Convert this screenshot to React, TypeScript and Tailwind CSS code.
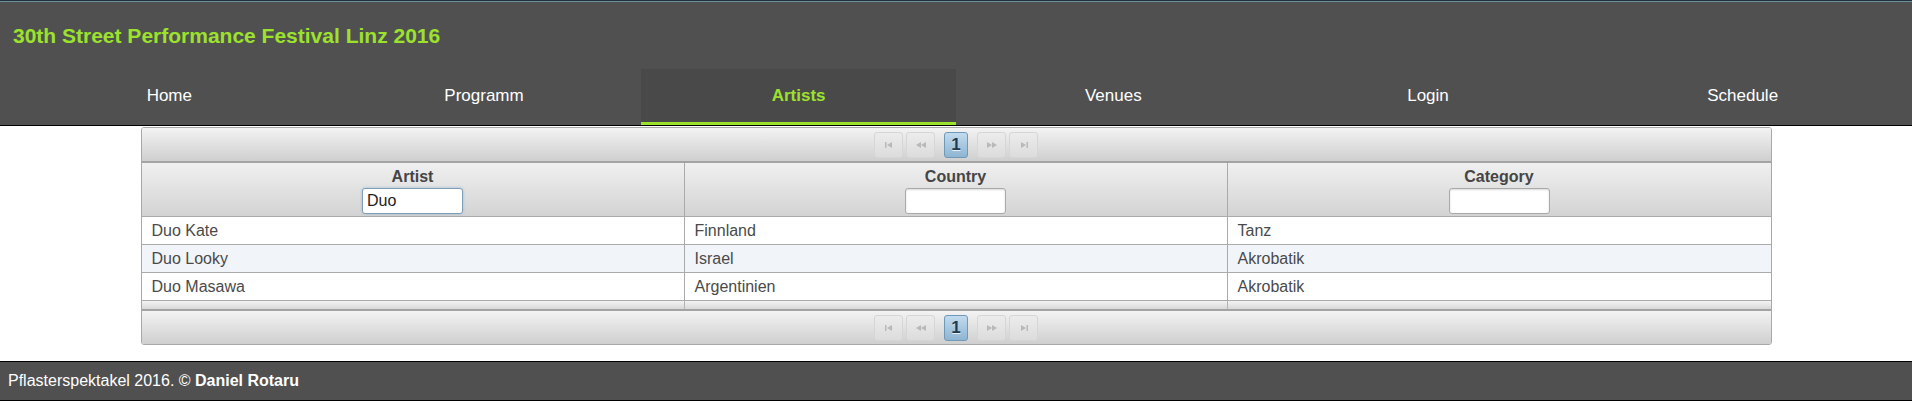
import React from "react";

const navItems = ["Home", "Programm", "Artists", "Venues", "Login", "Schedule"];

const rows = [
  ["Duo Kate", "Finnland", "Tanz"],
  ["Duo Looky", "Israel", "Akrobatik"],
  ["Duo Masawa", "Argentinien", "Akrobatik"],
];

function Icon({ kind }: { kind: "first" | "prev" | "next" | "last" }) {
  const c = "#b9b9b9";
  return (
    <svg width="12" height="8" viewBox="0 0 12 8">
      {kind === "first" && (
        <g fill={c}>
          <rect x="2" y="1" width="1.5" height="6" />
          <polygon points="9,1 4,4 9,7" />
        </g>
      )}
      {kind === "prev" && (
        <g fill={c}>
          <polygon points="6,1 1,4 6,7" />
          <polygon points="11,1 6,4 11,7" />
        </g>
      )}
      {kind === "next" && (
        <g fill={c}>
          <polygon points="1,1 6,4 1,7" />
          <polygon points="6,1 11,4 6,7" />
        </g>
      )}
      {kind === "last" && (
        <g fill={c}>
          <polygon points="3,1 8,4 3,7" />
          <rect x="8.5" y="1" width="1.5" height="6" />
        </g>
      )}
    </svg>
  );
}

function PagerButton({ kind }: { kind: "first" | "prev" | "next" | "last" }) {
  return (
    <div className="w-[29px] h-[26px] rounded-[3px] border border-[#d6d6d6] bg-gradient-to-b from-[#ececec] to-[#dcdcdc] flex items-center justify-center">
      <Icon kind={kind} />
    </div>
  );
}

function Paginator({ top }: { top: boolean }) {
  return (
    <div
      className={
        "h-[35px] bg-gradient-to-b from-[#f3f3f3] to-[#cfcfcf] flex items-center justify-center gap-[3px] " +
        (top ? "border-b-2 border-[#a3a3a3]" : "border-t-2 border-[#a3a3a3]")
      }
    >
      <PagerButton kind="first" />
      <PagerButton kind="prev" />
      <div className="mx-[6px] w-[24px] h-[26px] rounded-[3px] border border-[#6f99b8] bg-gradient-to-b from-[#c2dbee] to-[#8fb5d2] flex items-center justify-center text-[17px] font-bold text-[#1d3a52] [text-shadow:0_1px_0_#e6f0f8]">
        1
      </div>
      <PagerButton kind="next" />
      <PagerButton kind="last" />
    </div>
  );
}

export default function App() {
  return (
    <div className="w-[1912px] bg-white font-['Liberation_Sans',Arial,sans-serif]">
      <header className="bg-[#505050]">
        <div className="h-px bg-[#22313a]" />
        <div className="h-px bg-[#6d929e]" />
        <div className="h-[67px] flex items-center pl-[13px] text-[21px] font-bold text-[#9ce22d]">
          30th Street Performance Festival Linz 2016
        </div>
        <nav className="grid grid-cols-6 px-3 h-[56px]">
          {navItems.map((n) =>
            n === "Artists" ? (
              <div
                key={n}
                className="flex items-center justify-center bg-[#494949] border-b-[3px] border-[#9ce22d] text-[17px] font-bold text-[#9ce22d]"
              >
                {n}
              </div>
            ) : (
              <div key={n} className="flex items-center justify-center pb-[3px] text-[17px] text-white">
                {n}
              </div>
            )
          )}
        </nav>
        <div className="h-px bg-black" />
      </header>

      <main className="pt-px">
        <div className="w-[1631px] mx-auto border border-[#a8a8a8] rounded-[3px] overflow-hidden">
          <Paginator top />
          <div className="grid grid-cols-3 h-[54px] border-b border-[#aaaaaa] bg-gradient-to-b from-[#f0f0f0] to-[#d3d3d3]">
            {["Artist", "Country", "Category"].map((h, i) => (
              <div
                key={h}
                className={
                  "flex flex-col items-center pt-[5px] " + (i < 2 ? "border-r border-[#aaaaaa]" : "")
                }
              >
                <div className="text-[16px] leading-[18px] font-bold text-[#454545]">{h}</div>
                <input
                  readOnly
                  value={i === 0 ? "Duo" : ""}
                  className={
                    "mt-[2px] w-[101px] h-[26px] rounded-[3px] bg-white px-[4px] text-[16px] text-[#222] outline-none " +
                    (i === 0
                      ? "border border-[#7f9db5] shadow-[0_0_3px_#9fbcd3]"
                      : "border border-[#a9a9a9] shadow-[inset_0_1px_2px_rgba(0,0,0,0.15)]")
                  }
                />
              </div>
            ))}
          </div>
          {rows.map((r, ri) => (
            <div
              key={ri}
              className={
                "grid grid-cols-3 h-[28px] border-b border-[#aaaaaa] " + (ri % 2 === 1 ? "bg-[#f1f4f9]" : "bg-white")
              }
            >
              {r.map((c, ci) => (
                <div
                  key={ci}
                  className={
                    "flex items-center pl-[10px] text-[16px] text-[#4a4a4a] " +
                    (ci < 2 ? "border-r border-[#aaaaaa]" : "")
                  }
                >
                  {c}
                </div>
              ))}
            </div>
          ))}
          <div className="grid grid-cols-3 h-[8px] bg-gradient-to-b from-[#f4f4f4] to-[#d8d8d8]">
            <div className="border-r border-[#b5b5b5]" />
            <div className="border-r border-[#b5b5b5]" />
            <div />
          </div>
          <Paginator top={false} />
        </div>
      </main>

      <footer className="mt-[16px] border-y border-black bg-[#505050] h-[40px] flex items-center px-2 text-[16px] text-white">
        <span>
          Pflasterspektakel 2016. © <b>Daniel Rotaru</b>
        </span>
      </footer>
    </div>
  );
}
